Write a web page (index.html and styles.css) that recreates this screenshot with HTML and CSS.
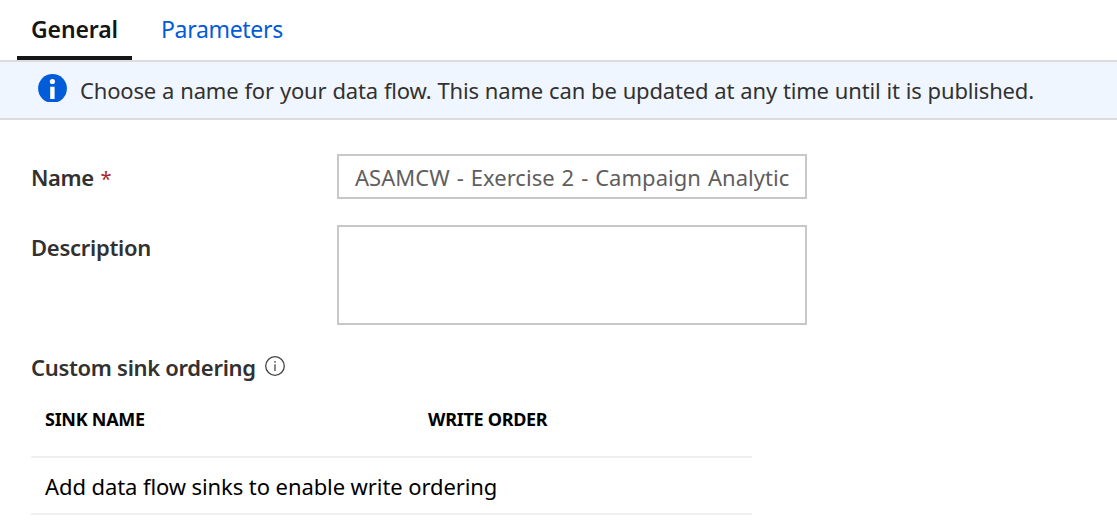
FILE: index.html
```html
<!DOCTYPE html>
<html lang="en">
<head>
<meta charset="utf-8">
<title>Data flow properties</title>
<link rel="stylesheet" href="styles.css">
</head>
<body>
<nav class="tabs">
  <a class="tab active"><span class="t t-general">General</span></a>
  <a class="tab"><span class="t t-params">Parameters</span></a>
</nav>
<div class="banner">
  <svg class="info" viewBox="0 0 29 28"><circle cx="14.5" cy="14.5" r="14.4" fill="#015cda"/><circle cx="14.4" cy="7.5" r="2.6" fill="#fff"/><path d="M12.2 12.7h4.4V25h-4.4z" fill="#fff"/></svg>
  <span class="t t-banner">Choose a name for your data flow. This name can be updated at any time until it is published.</span>
</div>
<main class="form">
  <div class="row row-name">
    <label class="label"><span class="t t-name">Name</span> <span class="req">*</span></label>
    <div class="input"><span class="t t-value">ASAMCW - Exercise 2 - Campaign Analytic</span></div>
  </div>
  <div class="row row-desc">
    <label class="label label-desc"><span class="t t-desc">Description</span></label>
    <div class="input area"></div>
  </div>
  <div class="label sink"><span class="t t-sink">Custom sink ordering</span>
    <svg class="hint" viewBox="0 0 22 22"><circle cx="11" cy="11" r="9.3" fill="none" stroke="#444" stroke-width="1.3"/><path d="M11 9.3V16M11 6v1.7" stroke="#555" stroke-width="1.4"/></svg>
  </div>
  <div class="table">
    <div class="thead"><div class="th"><span class="t t-head">SINK NAME</span></div><div class="th"><span class="t t-head">WRITE ORDER</span></div></div>
    <div class="empty"><span class="t t-empty">Add data flow sinks to enable write ordering</span></div>
  </div>
</main>
</body>
</html>
```
FILE: styles.css
```css
* { box-sizing: border-box; }
body { margin: 0; background: #fff; color: #323130; font: 22px/30px "Noto Sans", "Open Sans", sans-serif; white-space: nowrap; overflow: hidden; }
.t { display: inline-block; }
.tabs { display: flex; height: 60px; padding-left: 17px; font-size: 23px; }
.tab { height: 60px; padding: 14px 14px 0; color: #015cda; }
.tab.active { width: 115px; margin-right: 15px; color: #161514; font-weight: 600; border-bottom: 4px solid #161616; }
.t-general { letter-spacing: -0.12px; }
.t-params { letter-spacing: -0.32px; }
.banner { display: flex; height: 60px; padding: 12px 0 0 38px; gap: 13px; background: #f0f6ff; border-top: 2px solid #dcdcdc; border-bottom: 2px solid #dcdcdc; }
.info { width: 29px; height: 28px; flex: none; }
.t-banner { padding-top: 1px; letter-spacing: -0.16px; word-spacing: 0.4px; }
.form { padding: 34px 31px 0; }
.row { display: flex; }
.row-name { height: 71px; }
.row-desc { height: 126px; }
.label { width: 306px; font-weight: 600; padding-top: 8px; }
.label-desc { padding-top: 7px; }
.t-name { letter-spacing: -0.4px; }
.t-desc { letter-spacing: -0.28px; }
.t-sink { letter-spacing: -0.31px; }
.req { margin-left: 1px; color: #a4262c; font-size: 20px; font-weight: 400; }
.input { width: 470px; height: 45px; padding: 6px 16px 0; border: 2px solid #c8c8c8; color: #605e5c; }
.t-value { letter-spacing: 0.05px; word-spacing: 1.1px; }
.input.area { height: 100px; }
.sink { display: flex; gap: 8px; padding-top: 1px; height: 47px; }
.hint { width: 22px; height: 22px; margin-top: 3px; flex: none; }
.table { width: 721px; color: #000; }
.thead { display: flex; height: 60px; padding: 6px 14px 0; border-bottom: 2px solid #f0f0f0; font-size: 18px; font-weight: 700; }
.th { width: 383px; flex: none; }
.t-head { letter-spacing: -0.28px; }
.empty { height: 57px; padding: 13px 14px 0; border-bottom: 2px solid #f0f0f0; }
.t-empty { letter-spacing: -0.09px; }
```
